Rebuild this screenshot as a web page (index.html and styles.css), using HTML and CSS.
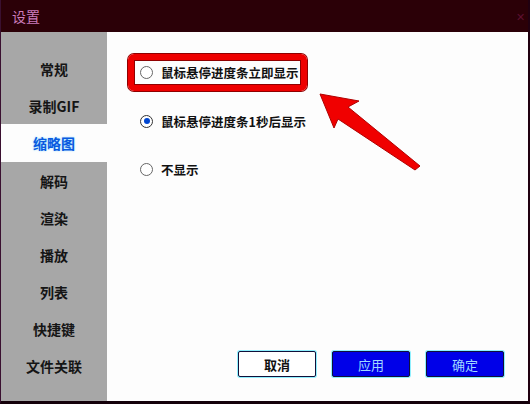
FILE: index.html
```html
<!DOCTYPE html>
<html lang="zh-CN">
<head>
  <meta charset="UTF-8">
  <title>设置</title>
  <link rel="stylesheet" href="styles.css">
</head>
<body>
  <div class="window">
    <!-- Title Bar -->
    <div class="titlebar">
      <span class="title">设置</span>
      <span class="close">&#x2715;</span>
    </div>

    <div class="main">
      <!-- Sidebar -->
      <ul class="sidebar">
        <li>常规</li>
        <li>录制GIF</li>
        <li class="active">缩略图</li>
        <li>解码</li>
        <li>渲染</li>
        <li>播放</li>
        <li>列表</li>
        <li>快捷键</li>
        <li>文件关联</li>
      </ul>

      <!-- Content -->
      <div class="content">
        <div class="options">
          <label class="option highlight"><span class="radio"></span>鼠标悬停进度条立即显示</label>
          <label class="option second"><span class="radio checked"></span>鼠标悬停进度条1秒后显示</label>
          <label class="option third"><span class="radio"></span>不显示</label>
        </div>

        <div class="buttons">
          <button class="btn cancel">取消</button>
          <button class="btn primary">应用</button>
          <button class="btn primary">确定</button>
        </div>

        <!-- Annotation arrow -->
        <svg class="arrow" width="110" height="85" viewBox="0 0 110 85">
          <polygon points="2,2 41,9 30,15 102,74 97,78 20,27 16,36"
                   fill="#f00000" stroke="#b00000" stroke-width="1" stroke-linejoin="round"/>
        </svg>
      </div>
    </div>
  </div>
</body>
</html>
```

FILE: styles.css
```css
/* General Styles */
* {
  box-sizing: border-box;
}

body {
  margin: 0;
  padding: 0;
  width: 530px;
  height: 404px;
  overflow: hidden;
  font-family: "Noto Sans CJK SC", "Noto Sans", sans-serif;
  background-color: #1a0008;
}

.window {
  width: 530px;
  height: 404px;
  display: flex;
  flex-direction: column;
  border-right: 2px solid #200010;
  border-bottom: 3px solid #14000a;
  border-left: 1px solid #3a1030;
}

/* Title Bar */
.titlebar {
  height: 32px;
  flex-shrink: 0;
  display: flex;
  justify-content: space-between;
  align-items: center;
  padding: 0 3px 0 11px;
  background-color: #2b0007;
}

.title {
  color: #cc7cbc;
  font-size: 14px;
}

.close {
  color: #5e1030;
  font-size: 11px;
}

.main {
  flex: 1;
  display: flex;
  background-color: #fdfdfd;
}

/* Sidebar */
.sidebar {
  width: 106px;
  margin: 0;
  padding: 18px 0 0;
  list-style: none;
  background-color: #a7a7a7;
}

.sidebar li {
  height: 37px;
  display: flex;
  align-items: center;
  justify-content: center;
  font-size: 14px;
  font-weight: bold;
  color: #151515;
}

.sidebar li.active {
  height: 38px;
  background-color: #fdfdfd;
  color: #0a5ae0;
  text-shadow: 0 0 2px #8fdcff;
}

/* Content */
.content {
  flex: 1;
  position: relative;
  display: flex;
  flex-direction: column;
  justify-content: space-between;
  padding: 22px 24px 24px 21px;
}

.options {
  display: flex;
  flex-direction: column;
  align-items: flex-start;
}

.option {
  height: 24px;
  display: flex;
  align-items: center;
  font-size: 12.5px;
  font-weight: bold;
  color: #111;
  padding-left: 12px;
}

.option .radio {
  width: 13px;
  height: 13px;
  border-radius: 50%;
  border: 1px solid #666;
  background-color: #fff;
  margin-right: 8px;
  display: flex;
  align-items: center;
  justify-content: center;
}

.option .radio.checked {
  border-color: #333;
}

.option .radio.checked::after {
  content: "";
  width: 6px;
  height: 6px;
  border-radius: 50%;
  background-color: #0046d0;
}

.option.highlight {
  height: 37px;
  width: 179px;
  padding-left: 6px;
  border: 6px solid #ee0000;
  border-radius: 6px;
  box-shadow: 0 0 0 1px #900000, inset 0 0 0 1px #900000;
}

.option.second {
  margin-top: 18px;
}

.option.third {
  margin-top: 24px;
}

/* Buttons */
.buttons {
  display: flex;
  justify-content: flex-end;
  gap: 16px;
}

.btn {
  width: 78px;
  height: 26px;
  border: 1px solid #10103a;
  border-radius: 2px;
  box-shadow: 0 0 0 1px #8ff0ff;
  font-family: "Noto Sans CJK SC", sans-serif;
  font-size: 13px;
  cursor: pointer;
}

.btn.cancel {
  background-color: #fff;
  color: #111;
  font-weight: bold;
}

.btn.primary {
  background-color: #0000e8;
  color: #9fd8ff;
}

/* Annotation arrow */
.arrow {
  position: absolute;
  left: 211px;
  top: 60px;
}
```
